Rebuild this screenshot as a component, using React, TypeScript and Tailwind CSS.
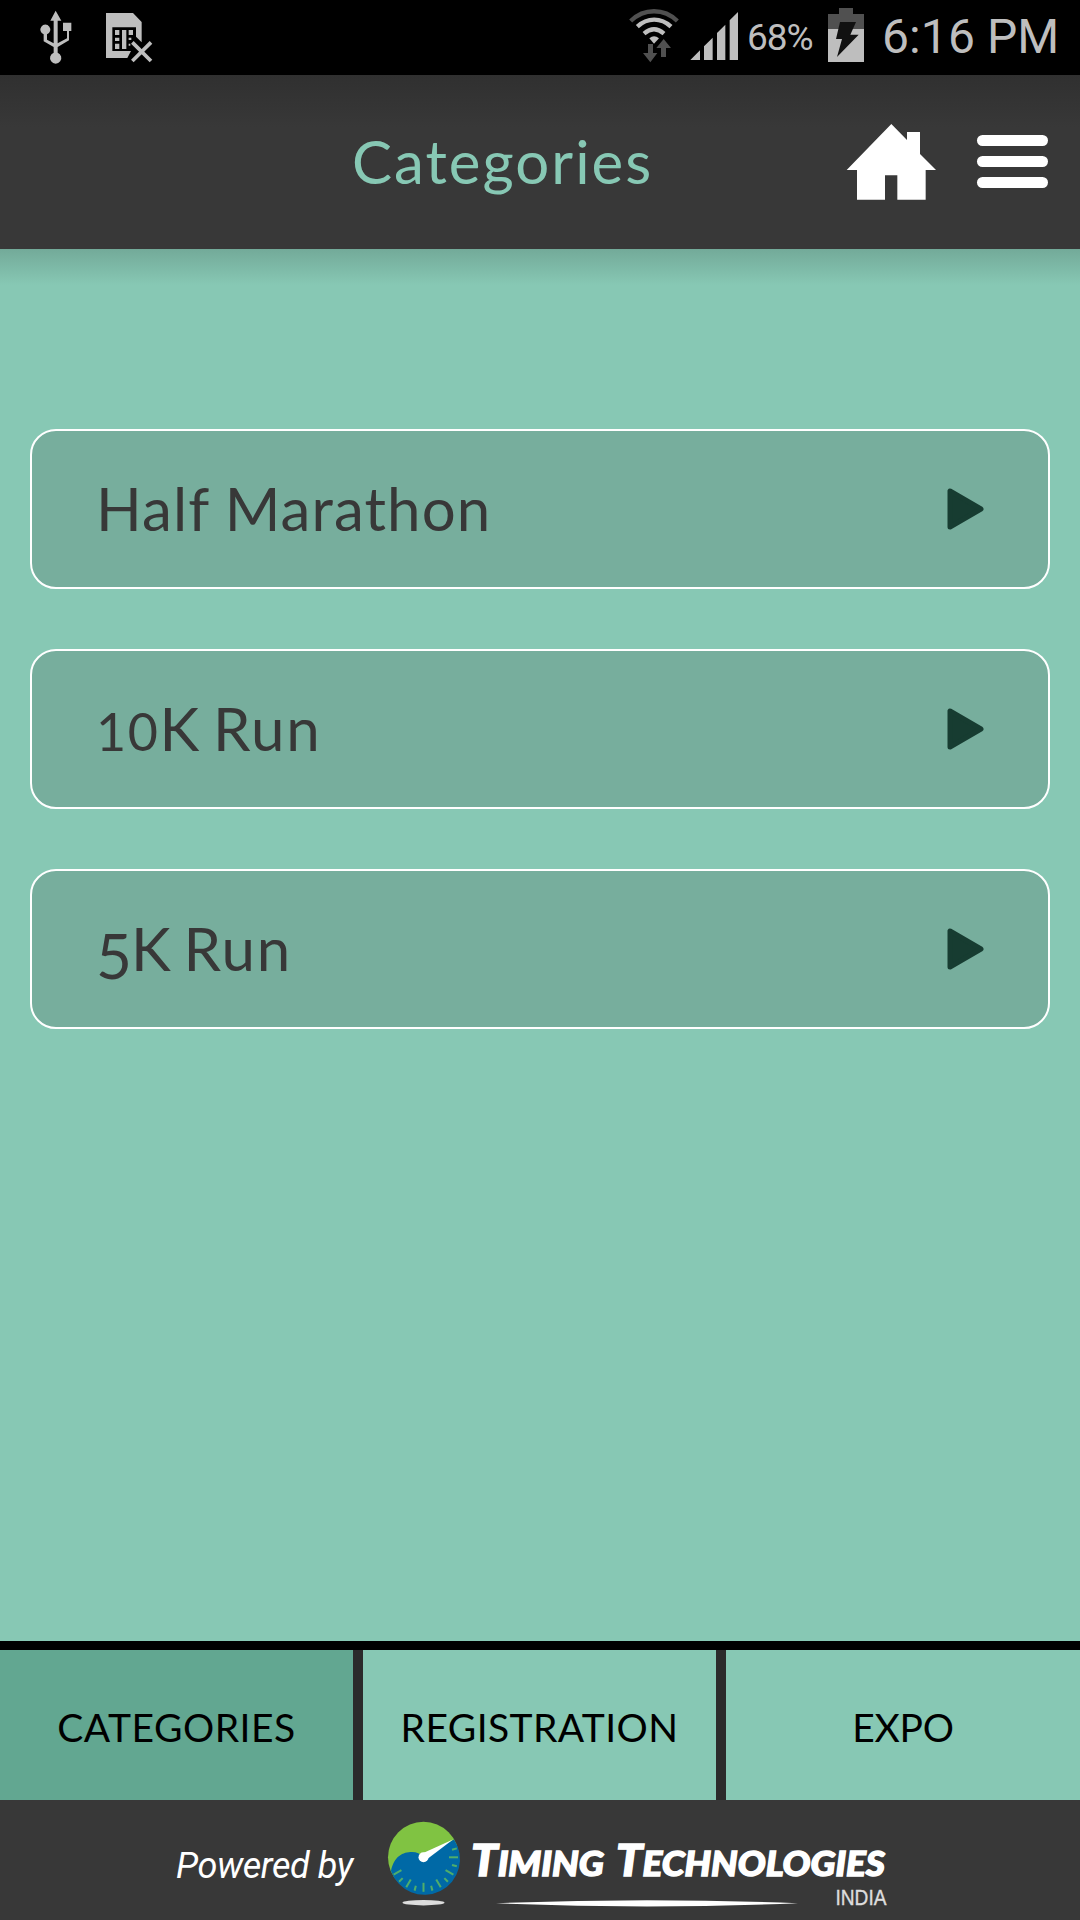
import { useState } from "react"

const categories = [
    { digits: "", label: "Half Marathon", style: "tracking-[1.1px] [word-spacing:-1px]" },
    { digits: "10", label: "K Run", style: "tracking-[1.7px] [word-spacing:-5px]" },
    { digits: "5", label: "K Run", style: "tracking-[1.7px] [word-spacing:-6px]" },
]

const tabs = [
    { name: "CATEGORIES", style: "w-[353px] tracking-[0.5px]" },
    { name: "REGISTRATION", style: "w-[353px] tracking-[0.4px]" },
    { name: "EXPO", style: "w-[354px] tracking-[-0.3px]" },
]

function StatusBar() {
  return (
    <div className="flex h-[75px] justify-between bg-black text-[#bebebe]">
        <svg className="h-[75px] w-60" viewBox="0 0 720 225" fill="#bebebe">
            <path d="M167 32L184 62H173V130L201 115V93H189V68H214V93H207V121L173 141V158A17 17 0 1 1 161 158V141L131 124V103A15 15 0 1 1 141 103V119L161 130V62H151Z" />
            <path d="M318 39H399L425 66V127L408 110V82H337V153H393L382 174H318Z" />
            <path d="M345 90h13v15h-13zM366 90h13v57h-13zM386 90h13v15h-13zM345 113h13v10h-13zM345 131h13v16h-13zM386 113h8v7h-8zM386 131h5v6h-5z" />
            <path d="M397 127L453 183M453 127L397 183" stroke="#bebebe" strokeWidth="11" />
        </svg>
        <div className="flex">
            <svg className="h-[75px] w-[139px]" viewBox="0 0 417 225">
                <g fill="none" strokeWidth="13">
                    <path d="M62 63C102 24 162 24 202 63" stroke="#505050" />
                    <path d="M82 80C112 52 153 52 183 80" stroke="#bebebe" />
                    <path d="M102 101Q132 75 162 101" stroke="#bebebe" />
                </g>
                <path d="M118 115Q132 102 147 115L132 131Z" fill="#bebebe" />
                <path d="M114 132H129V159H142L121 187L99 159H114ZM161 117L183 144H168V171H153V144H139Z" fill="#505050" />
                <path d="M241 180L270 151V180ZM282 180V139L308 113V180ZM321 180V99L346 74V180ZM359 180V61L384 36V180Z" fill="#bebebe" />
            </svg>
            <span className="-ml-0.5 w-[74px] pt-[13px] font-[Roboto] text-[37px] leading-[50px] tracking-[-1px] whitespace-nowrap">68%</span>
            <svg className="h-[75px] w-[62px]" viewBox="0 0 186 225">
                <path d="M54 24H96V42H129V87H21V42H54Z" fill="#505050" />
                <path d="M21 87H129V186H21Z" fill="#bebebe" />
                <path d="M57 66H105L88 104H113L48 171L63 117H45Z" fill="#111" />
            </svg>
            <span className="-ml-px w-[198px] pt-[7px] font-[Roboto] text-[48px] leading-[60px] tracking-[0.1px] whitespace-nowrap">6:16 PM</span>
        </div>
    </div>
  )
}

function Header() {
  return (
    <header className="flex h-[174px] items-start bg-linear-to-b from-[#303030] to-[#383838] to-30%">
        <h1 className="ml-[352px] w-[494px] pt-[49px] text-[60px] leading-[74px] tracking-[2px] text-[#87c8b4]">Categories</h1>
        <button className="pt-[49px]">
            <svg className="h-[76px] w-[91px]" viewBox="-3 0 273 228" fill="#fff">
                <path d="M133 0L180 48V24H219V90L267 138H236V227H151V154H114V227H30V138H-1Z" />
            </svg>
        </button>
        <button className="ml-10 flex flex-col gap-[10px] pt-[60px]">
            <span className="h-[11px] w-[71px] rounded-full bg-white" />
            <span className="h-[11px] w-[71px] rounded-full bg-white" />
            <span className="h-[11px] w-[71px] rounded-full bg-white" />
        </button>
    </header>
  )
}

function Logo() {
    // tick marks round the lower half of the dial
    const ticks = [0, 15, 30, 45, 60, 75, 90, 105, 120, 135, 150, 165]

  return (
    <svg className="ml-6 h-[120px] w-[520px]" viewBox="380 0 520 120">
        <circle cx="423.5" cy="57.3" r="35.5" fill="#80c342" />
        <path d="M454 39.5A35.5 35.5 0 1 1 391 71C394 56 403 52 412 52Q419 52 423 57Z" fill="#0069a6" />
        {ticks.map((t, i) => (
            <path key={t} d={i % 2 === 1 ? "M449 57.3H458" : "M453 57.3H458"} transform={`rotate(${t - 15} 423.5 57.3)`} stroke="#4fae6b" strokeWidth="2" />
        ))}
        <path d="M421 54L453 39.5L426 60Z" fill="#fff" />
        <circle cx="423.5" cy="57.3" r="5" fill="#fff" />
        <ellipse cx="423.5" cy="102.7" rx="21" ry="2.7" fill="#ddd" />
        <g fill="#fff" stroke="#fff" strokeWidth="1.4" fontFamily="Lato" fontWeight="900" fontStyle="italic" fontSize="34.5">
            <text x="471" y="76" textLength="133" lengthAdjust="spacingAndGlyphs"><tspan fontSize="44">T</tspan>IMING</text>
            <text x="616" y="76" textLength="269" lengthAdjust="spacingAndGlyphs"><tspan fontSize="44">T</tspan>ECHNOLOGIES</text>
        </g>
        <path d="M496 103.3Q647 97 798 103.3Q647 109.5 496 103.3Z" fill="#fff" />
        <text x="835.5" y="105" textLength="51" lengthAdjust="spacingAndGlyphs" fill="#ddd" stroke="#ddd" strokeWidth="0.4" fontFamily="Liberation Sans" fontSize="21.5">INDIA</text>
    </svg>
  )
}

function App() {
    const [activeTab, setActiveTab] = useState("CATEGORIES");

  return (
    <div className="flex h-[1920px] w-[1080px] flex-col overflow-hidden bg-[#87c8b4] font-[Lato]">
        <StatusBar />
        <Header />
        <div className="h-9 bg-linear-to-b from-[#73aa99] to-[#87c8b4]" />
        <main className="flex flex-1 flex-col gap-[60px] px-[30px] pt-36">
            {categories.map((c) => (
                <button key={c.digits + c.label} className="flex h-40 items-center justify-between rounded-[26px] border-2 border-white bg-[#77ae9d] pr-[64px] pl-[64px] text-[#383838]">
                    <span className={`-mt-0.5 flex h-[76px] items-baseline text-[60px] leading-[76px] ${c.style}`}>
                        {c.digits && <span className={c.digits === "5" ? "relative top-2 text-[62px] leading-none tracking-[-1px]" : "text-[52px] leading-none tracking-[1.6px]"}>{c.digits}</span>}
                        {c.label}
                    </span>
                    <svg className="h-[42px] w-[37px]" viewBox="0 0 37 42">
                        <path d="M3 3V39L34 21Z" fill="#173c31" stroke="#173c31" strokeWidth="5" strokeLinejoin="round" />
                    </svg>
                </button>
            ))}
        </main>
        <nav className="flex h-[159px] gap-[10px] border-t-[9px] border-black bg-[#2b2b2b]">
            {tabs.map((t) => (
                <button key={t.name} onClick={() => setActiveTab(t.name)} className={`pt-1 text-[39px] text-black ${t.style} ${activeTab === t.name ? "bg-[#62a791]" : "bg-[#87c8b4]"}`}>{t.name}</button>
            ))}
        </nav>
        <footer className="flex h-[120px] bg-[#383838] pl-[176px] text-white">
            <p className="w-[180px] pt-[41px] font-[Roboto] text-[36px] leading-[50px] tracking-[-0.4px] whitespace-nowrap italic">Powered by</p>
            <Logo />
        </footer>
    </div>
  )
}

export default App
